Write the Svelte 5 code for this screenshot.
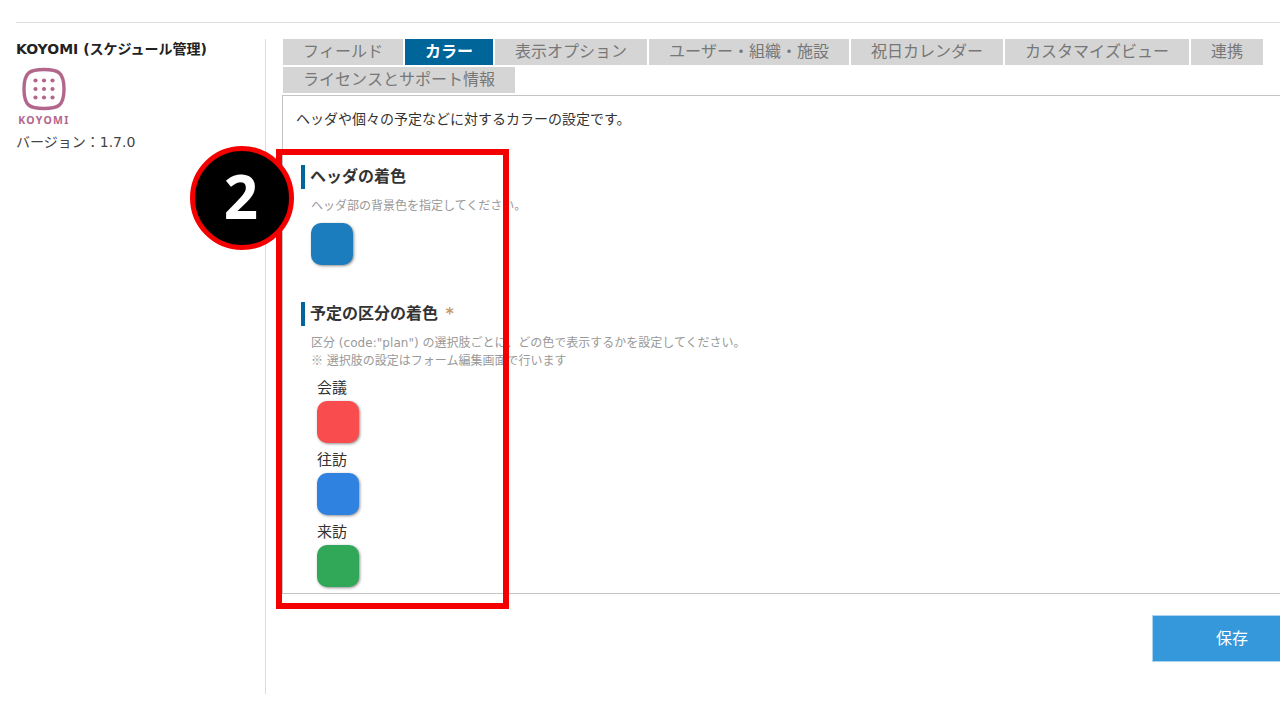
<script>
  const tabs = ['フィールド','カラー','表示オプション','ユーザー・組織・施設','祝日カレンダー','カスタマイズビュー','連携','ライセンスとサポート情報'];
  const plans = [
    { name: '会議', color: '#f94c4e' },
    { name: '往訪', color: '#3082e0' },
    { name: '来訪', color: '#31a858' }
  ];
  const dots = [];
  for (const y of [80.5, 89, 97.5]) for (const x of [35.5, 44, 52.5]) dots.push({ x, y });
</script>

<div class="page">
  <div class="columns">
    <aside class="side">
      <h1>KOYOMI (スケジュール管理)</h1>
      <div class="logo">
        <svg width="44" height="44" viewBox="22 67 44 44" aria-hidden="true">
          <path d="M44 69.5 C58 69.5 64 72 64 89 C64 106 58 108.5 44 108.5 C30 108.5 24 106 24 89 C24 72 30 69.5 44 69.5 Z" fill="none" stroke="#b3668c" stroke-width="3.4" />
          {#each dots as d}
            <circle cx={d.x} cy={d.y} r="2.1" fill="#b3668c" />
          {/each}
        </svg>
        <span>KOYOMI</span>
      </div>
      <p class="version">バージョン：1.7.0</p>
    </aside>

    <main class="main">
      <nav class="tabs">
        {#each tabs as t, i}
          <div class="tab" class:active={i === 1}>{t}</div>
        {/each}
      </nav>

      <section class="panel">
        <p class="lead">ヘッダや個々の予定などに対するカラーの設定です。</p>

        <h2 class="first">ヘッダの着色</h2>
        <p class="help">ヘッダ部の背景色を指定してください。</p>
        <div class="swatch header-swatch"></div>

        <h2 class="second">予定の区分の着色 <span class="req">*</span></h2>
        <p class="help">区分 <span class="code">(code:"plan")</span> の選択肢ごとに、どの色で表示するかを設定してください。<br /><span class="cjk">※</span> 選択肢の設定はフォーム編集画面で行います</p>
        <div class="plans">
          {#each plans as p}
            <div class="plan">
              <div class="plan-name">{p.name}</div>
              <div class="swatch" style="background:{p.color}"></div>
            </div>
          {/each}
        </div>
      </section>

      <div class="actions">
        <button class="save">保存</button>
      </div>
    </main>
  </div>

  <div class="mark"></div>
  <div class="badge">2</div>
</div>

<style>
  :global(body) {
    margin: 0;
    overflow: hidden;
    background: #fff;
  }
  .page {
    position: relative;
    width: 1280px;
    height: 720px;
    box-sizing: border-box;
    padding-top: 22px;
    padding-left: 16px;
    overflow: hidden;
    font-family: "DejaVu Sans", "Noto Sans CJK JP", sans-serif;
    color: #333;
  }
  .columns {
    display: flex;
    border-top: 1px solid #ddd;
    padding-top: 16px;
  }
  .side {
    width: 249px;
    height: 655px;
    border-right: 1px solid #ddd;
    flex: none;
  }
  h1 {
    margin: 0;
    font-size: 14px;
    line-height: 20px;
    font-weight: 700;
    color: #222;
  }
  .logo {
    display: flex;
    flex-direction: column;
    align-items: center;
    width: 56px;
    margin-top: 8px;
  }
  .logo svg {
    display: block;
  }
  .logo span {
    font-family: "Noto Sans", sans-serif;
    font-size: 10.5px;
    line-height: 12px;
    letter-spacing: 1.3px;
    font-weight: 700;
    color: #b3668c;
    margin-top: 3px;
  }
  .version {
    margin: 6px 0 0;
    font-size: 14px;
    line-height: 20px;
    color: #444;
  }
  .main {
    flex: 1;
    min-width: 0;
    padding-left: 17px;
  }
  .tabs {
    display: flex;
    flex-wrap: wrap;
    gap: 2px;
  }
  .tab {
    height: 26px;
    line-height: 22px;
    padding: 0 20px;
    font-size: 16px;
    font-kerning: none;
    font-family: "Noto Sans CJK JP", sans-serif;
    background: #d5d5d5;
    color: #777;
  }
  .tab.active {
    background: #006699;
    color: #fff;
    font-weight: 700;
  }
  .panel {
    box-sizing: border-box;
    height: 499px;
    margin: 2px -2px 0 -1px;
    padding: 13px 13px 0 18px;
    border: 1px solid #c4c4c4;
  }
  .lead {
    margin: 0 0 0 -5px;
    font-size: 14px;
    line-height: 20px;
    color: #333;
  }
  h2 {
    margin: 0;
    height: 24px;
    line-height: 24px;
    padding-left: 5px;
    border-left: 4px solid #006699;
    font-size: 16px;
    font-weight: 700;
    color: #333;
  }
  h2.first {
    margin-top: 36px;
  }
  h2.second {
    margin-top: 37px;
  }
  .req {
    color: #c49a6c;
    margin-left: 2px;
  }
  .help {
    margin: 8px 0 0 10px;
    font-size: 12px;
    line-height: 18px;
    color: #999;
  }
  .code {
    letter-spacing: 0.05px;
  }
  .cjk {
    font-family: "Noto Sans CJK JP", sans-serif;
    line-height: 0;
  }
  .swatch {
    width: 42px;
    height: 42px;
    border-radius: 10px;
    box-shadow: 1px 1px 3px rgba(0, 0, 0, 0.45);
  }
  .header-swatch {
    background: #1b7dbd;
    margin: 8px 0 0 10px;
  }
  .plans {
    margin: 1px 0 0 16px;
  }
  .plan {
    height: 72px;
  }
  .plan-name {
    height: 30px;
    line-height: 34px;
    font-size: 15px;
    color: #333;
  }
  .actions {
    display: flex;
    justify-content: flex-end;
    margin-top: 21px;
  }
  .save {
    width: 160px;
    height: 47px;
    margin-right: -32px;
    background: #3498db;
    border: 1px solid #a9d3ef;
    color: #fff;
    font: inherit;
    font-size: 16px;
    padding: 0 0 3px;
  }
  .mark {
    position: absolute;
    left: 276px;
    top: 149px;
    width: 233px;
    height: 460px;
    box-sizing: border-box;
    border: 6px solid #f40000;
  }
  .badge {
    position: absolute;
    left: 190px;
    top: 146px;
    width: 104px;
    height: 104px;
    box-sizing: border-box;
    border: 5px solid #f40000;
    border-radius: 50%;
    background: #000;
    color: #fff;
    font-size: 60px;
    font-weight: 700;
    line-height: 90px;
    text-align: center;
    font-family: "Open Sans", sans-serif;
    text-indent: -2px;
  }
</style>
